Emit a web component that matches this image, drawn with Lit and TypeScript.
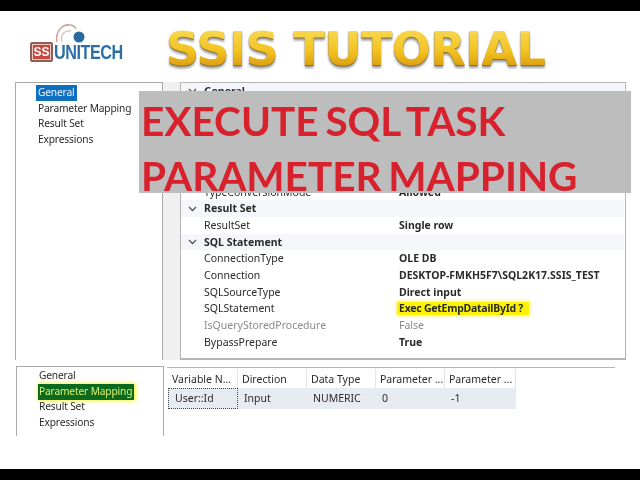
import { LitElement, html, css } from "lit";
import { customElement } from "lit/decorators.js";

const chevron = html`<svg class="chev" width="9" height="6" viewBox="0 0 9 6"><path d="M1 1l3.5 3.5L8 1" fill="none" stroke="#555" stroke-width="1.3"/></svg>`;

@customElement("app-root")
export class AppRoot extends LitElement {
  static styles = css`
    :host { display: block; width: 640px; height: 480px; position: relative; overflow: hidden; background: #fff; font-family: "Noto Sans", sans-serif; font-size: 10.2px; color: #2a2a2a; filter: blur(0.35px); }
    .bar { height: 11px; background: #000; }
    .bar.bottom { height: 11px; position: absolute; left: 0; right: 0; bottom: 0; }
    .head { height: 71px; box-sizing: border-box; display: flex; padding: 13px 0 0 30px; }
    .logo { position: relative; width: 91px; height: 38px; display: flex; align-items: flex-end; gap: 1px; }
    .arcs { position: absolute; left: 24px; top: 0; }
    .ss { width: 23px; height: 20px; box-sizing: border-box; background: #c8493a; border: 2px solid #8f5f55; border-radius: 2px; color: #fff; font: bold 12px/16px "Liberation Sans", sans-serif; text-align: center; outline: 1px solid #e9c9c0; outline-offset: -3px; flex: none; }
    .uni { font: bold 20.5px/20px "Liberation Sans", sans-serif; color: #2c6fa6; transform: scaleX(0.79); transform-origin: left bottom; letter-spacing: -0.6px; white-space: nowrap; }
    .title { margin: 2px 0 0 45px; font: bold 46px/46px "DejaVu Sans", sans-serif; letter-spacing: -0.6px; white-space: pre; background: linear-gradient(#f8dc5a 0%, #f3c21f 45%, #d99a10 75%, #c58a12 100%); -webkit-background-clip: text; background-clip: text; color: transparent; filter: drop-shadow(0 1px 0 #8c7432) drop-shadow(0 2px 1px #9a9a9a); }

    .upper { display: flex; margin-left: 15px; height: 278px; }
    .nav { width: 148px; box-sizing: border-box; border: 1px solid #a9a9a9; border-width: 1px 1px 0 1px; padding: 2px 0 0 22px; letter-spacing: -0.15px; }
    .nav div { height: 15.7px; line-height: 15.7px; white-space: nowrap; }
    .nav .sel { display: inline-block; background: #0f6fc0; color: #eaf4ff; padding: 0 2px; margin-left: -2px; height: 16px; margin-bottom: -0.3px; }
    .gutter { width: 17px; background: #f0f0f0; }
    .props { width: 446px; box-sizing: border-box; border: 1px solid #b4b4b4; border-bottom-width: 2px; position: relative; font-size: 10.5px; }
    .spacer { height: 84px; }
    .row { display: grid; grid-template-columns: 23px 195px 1fr; height: 16.67px; line-height: 16.67px; align-items: center; white-space: nowrap; }
    .row.sec { background: #f4f6f9; font-weight: 700; margin-right: 1px; }
    .chev { justify-self: center; }
    .val { font-weight: 700; }
    .dim { color: #8a8a8a; }
    .mark { background: #fff200; box-shadow: 0 0 3px 1px #fff46a; padding: 0 6px 0 2px; margin-left: -2px; justify-self: start; font-weight: 700; height: 13px; line-height: 13px; letter-spacing: -0.25px; }

    .lower { display: flex; margin: 6px 0 0 16px; height: 70px; }
    .nav2 { width: 148px; box-sizing: border-box; border: 1px solid #a9a9a9; border-bottom: 0; padding: 1px 0 0 22px; letter-spacing: -0.15px; }
    .nav2 div { height: 15.7px; line-height: 15.7px; white-space: nowrap; }
    .nav2 .green { display: inline-block; background: #0b6a1f; color: #dcf06a; padding: 0 2px 0 1px; margin-left: -1px; height: 16px; box-shadow: 1px 0 4px 1px #f6f53c; }
    .gridwrap { margin: 1px 0 0 3px; width: 448px; border-top: 1px solid #b8b8b8; padding-top: 1px; font-size: 10.5px; }
    .grid { display: grid; grid-template-columns: 70px 69px 69px 69px 71px; width: 348px; margin-left: 1px; }
    .th { height: 19px; line-height: 21px; padding-left: 4px; border-right: 1px solid #e4e4e4; white-space: nowrap; overflow: hidden; }
    .td { height: 21px; line-height: 21px; padding-left: 6px; background: #e6ecf2; white-space: nowrap; }
    .td.focus { outline: 1px dotted #444; outline-offset: -1px; padding-left: 7px; }

    .banner { position: absolute; left: 139px; top: 91px; width: 492px; height: 102px; background: #bdbdbd; color: #d7222e; font: 700 40.5px/55px Lato, sans-serif; word-spacing: -3px; padding: 2px 0 0 2px; box-sizing: border-box; white-space: nowrap; }
  `;

  render() {
    return html`
      <div class="bar"></div>
      <div class="head">
        <div class="logo">
          <svg class="arcs" width="40" height="32" viewBox="0 0 40 32">
            <path d="M3 18C1 8 8 0 16 1C19 1 21 3 22 5" fill="none" stroke="#c9a79a" stroke-width="1.6"/>
            <path d="M8 18C6 11 10 6 17 7" fill="none" stroke="#d8c4bb" stroke-width="1.4"/>
            <circle cx="25" cy="13" r="5.5" fill="#2a6a9e"/>
          </svg>
          <div class="ss">SS</div>
          <div class="uni">UNITECH</div>
        </div>
        <div class="title">SSIS TUTORIAL</div>
      </div>
      <div class="upper">
        <div class="nav">
          <div><span class="sel">General</span></div>
          <div>Parameter Mapping</div>
          <div>Result Set</div>
          <div>Expressions</div>
        </div>
        <div class="gutter"></div>
        <div class="props">
          <div class="row sec">${chevron}<span>General</span></div>
          <div class="spacer"></div>
          <div class="row"><span></span><span>TypeConversionMode</span><span class="val">Allowed</span></div>
          <div class="row sec">${chevron}<span>Result Set</span></div>
          <div class="row"><span></span><span>ResultSet</span><span class="val">Single row</span></div>
          <div class="row sec">${chevron}<span>SQL Statement</span></div>
          <div class="row"><span></span><span>ConnectionType</span><span class="val">OLE DB</span></div>
          <div class="row"><span></span><span>Connection</span><span class="val">DESKTOP-FMKH5F7\\SQL2K17.SSIS_TEST</span></div>
          <div class="row"><span></span><span>SQLSourceType</span><span class="val">Direct input</span></div>
          <div class="row"><span></span><span>SQLStatement</span><span class="mark">Exec GetEmpDatailById ?</span></div>
          <div class="row dim"><span></span><span>IsQueryStoredProcedure</span><span>False</span></div>
          <div class="row"><span></span><span>BypassPrepare</span><span class="val">True</span></div>
        </div>
      </div>
      <div class="lower">
        <div class="nav2">
          <div>General</div>
          <div><span class="green">Parameter Mapping</span></div>
          <div>Result Set</div>
          <div>Expressions</div>
        </div>
        <div class="gridwrap">
          <div class="grid">
            <div class="th">Variable N...</div>
            <div class="th">Direction</div>
            <div class="th">Data Type</div>
            <div class="th">Parameter ...</div>
            <div class="th">Parameter ...</div>
            <div class="td focus">User::Id</div>
            <div class="td">Input</div>
            <div class="td">NUMERIC</div>
            <div class="td">0</div>
            <div class="td">-1</div>
          </div>
        </div>
      </div>
      <div class="banner">EXECUTE SQL TASK<br />PARAMETER MAPPING</div>
      <div class="bar bottom"></div>
    `;
  }
}
